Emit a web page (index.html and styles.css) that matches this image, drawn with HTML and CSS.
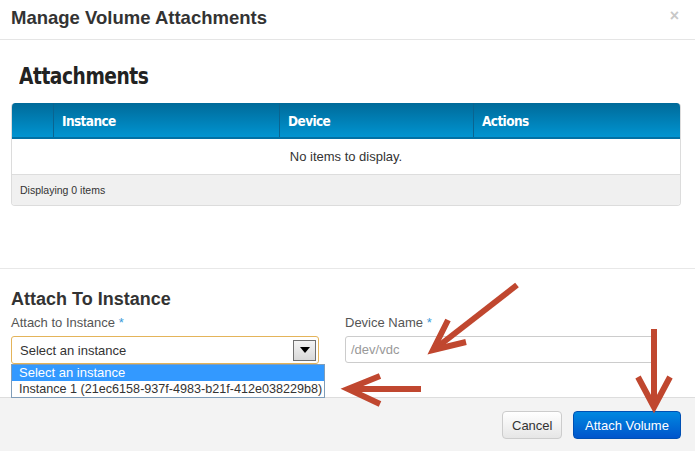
FILE: index.html
```html
<!DOCTYPE html>
<html>
<head>
<meta charset="utf-8">
<link rel="stylesheet" href="styles.css">
</head>
<body>
<div class="modal">
  <div class="modal-header">
    <h3 class="modal-title">Manage Volume Attachments</h3>
    <span class="close">×</span>
  </div>
  <div class="attachments">
    <h2 class="section-title">Attachments</h2>
    <div class="table">
      <div class="thead">
        <div class="th th-check"></div>
        <div class="th th-inst">Instance</div>
        <div class="th th-dev">Device</div>
        <div class="th th-act">Actions</div>
      </div>
      <div class="tbody-empty">No items to display.</div>
      <div class="tfoot">Displaying 0 items</div>
    </div>
  </div>
  <div class="attach">
    <h3 class="attach-title">Attach To Instance</h3>
    <div class="form-row">
      <div class="field field-instance">
        <label class="label">Attach to Instance <span class="req">*</span></label>
        <div class="select">
          <span class="select-text">Select an instance</span>
          <span class="select-btn"><span class="tri"></span></span>
        </div>
        <div class="dropdown">
          <div class="opt opt-active">Select an instance</div>
          <div class="opt">Instance 1 (21ec6158-937f-4983-b21f-412e038229b8)</div>
        </div>
      </div>
      <div class="field field-device">
        <label class="label">Device Name <span class="req">*</span></label>
        <div class="input">/dev/vdc</div>
      </div>
    </div>
  </div>
  <div class="modal-footer">
    <button class="btn btn-cancel">Cancel</button>
    <button class="btn btn-primary">Attach Volume</button>
  </div>
  <svg class="arrows" width="695" height="451" viewBox="0 0 695 451">
    <g fill="none" stroke="#c0472f" stroke-width="6" stroke-linejoin="miter" stroke-linecap="butt">
      <line x1="517" y1="285" x2="436" y2="348"/>
      <polyline points="448,320 433,350 466,342"/>
      <line x1="421" y1="389" x2="350" y2="389"/>
      <polyline points="380,376 348,389 380,404"/>
      <line x1="654" y1="329" x2="654" y2="404"/>
      <polyline points="638,377 654,407 670,377"/>
    </g>
  </svg>
</div>
</body>
</html>
```

FILE: styles.css
```css
* { box-sizing: border-box; }
html, body { margin: 0; padding: 0; background: #fff; }
body {
  font-family: "Liberation Sans", Arial, sans-serif;
  color: #333;
  width: 695px;
  height: 451px;
  overflow: hidden;
}
.modal { position: relative; width: 695px; height: 451px; display: flex; flex-direction: column; }
.modal-header {
  height: 40px;
  border-bottom: 1px solid #e5e5e5;
  display: flex;
  align-items: center;
  justify-content: space-between;
  padding: 0 16px 4px 11px;
}
.modal-title { margin: 0; font-size: 18.5px; font-weight: bold; color: #333; }
.close { color: #c8c8c8; font-size: 16px; font-weight: bold; margin-top: -4px; }
.attachments { padding: 23px 14px 0 11px; height: 229px; border-bottom: 1px solid #e8e8e8; }
.section-title {
  margin: 0 0 13px 8px;
  font-family: "DejaVu Sans Condensed", "DejaVu Sans", sans-serif;
  font-stretch: condensed;
  font-size: 23px;
  font-weight: bold;
  color: #222;
  line-height: 27px;
  letter-spacing: -0.5px;
  transform: scaleX(0.9);
  transform-origin: left center;
}
.table { border-radius: 4px; border: 1px solid #dcdcdc; border-top: none; overflow: hidden; }
.thead {
  display: flex;
  height: 36px;
  background: linear-gradient(#006a99, #0094d1);
  border-bottom: 2px solid #0170a4;
  border-radius: 4px 4px 0 0;
  margin: 0 -1px;
}
.th {
  color: #fff;
  font-family: "DejaVu Sans Condensed", "DejaVu Sans", sans-serif;
  font-stretch: condensed;
  font-weight: bold;
  font-size: 13.5px;
  letter-spacing: -0.6px;
  padding: 10px 8px 0 8px;
  border-left: 1px solid #0a6490;
}
.th-check { width: 42px; border-left: none; }
.th-inst { width: 226px; }
.th-dev { width: 194px; }
.th-act { flex: 1; }
.tbody-empty { height: 35px; line-height: 35px; text-align: center; font-size: 13px; color: #333; background: #fff; }
.tfoot { height: 31px; line-height: 30px; background: #f0f0f0; border-top: 1px solid #ddd; font-size: 10.5px; padding-left: 8px; color: #333; }
.attach { padding: 20px 14px 0 11px; height: 128px; }
.attach-title { margin: 0 0 6px 0; font-size: 18px; font-weight: bold; color: #333; line-height: 20px; }
.form-row { display: flex; gap: 26px; }
.field { position: relative; display: flex; flex-direction: column; }
.field-instance { width: 308px; }
.field-device { width: 309px; }
.label { font-size: 13px; color: #555; line-height: 16px; margin-bottom: 5px; }
.req { color: #3a9ad9; }
.select {
  height: 28px;
  border: 1px solid #e4b45a;
  border-radius: 3px;
  display: flex;
  align-items: center;
  justify-content: space-between;
  padding: 0 2px 0 8px;
  font-size: 13px;
  color: #333;
}
.select-btn {
  width: 23px; height: 21px;
  border: 1px solid #707070;
  background: linear-gradient(#f4f4f4, #d8d8d8);
  display: flex; align-items: center; justify-content: center;
}
.tri { width: 0; height: 0; border-left: 5px solid transparent; border-right: 5px solid transparent; border-top: 6px solid #000; }
.dropdown {
  position: absolute;
  left: 0; top: 49px;
  width: 314px;
  border: 1px solid #7f9db9;
  background: #fff;
  font-size: 12.6px;
  z-index: 2;
}
.opt { height: 16px; line-height: 16px; padding-left: 7px; color: #333; white-space: nowrap; }
.opt-active { background: #3399ff; color: #fff; font-size: 13px; }
.input {
  height: 27px;
  border: 1px solid #ccc;
  border-radius: 3px;
  line-height: 26px;
  padding-left: 5px;
  font-size: 13px;
  color: #999;
}
.modal-footer {
  flex: 1;
  background: #f3f3f3;
  border-top: 1px solid #ddd;
  display: flex;
  justify-content: flex-end;
  align-items: flex-start;
  gap: 11px;
  padding: 13px 14px 0 0;
}
.btn {
  height: 28px;
  border-radius: 4px;
  font-family: "Liberation Sans", Arial, sans-serif;
  font-size: 13px;
  padding: 0 9px;
}
.btn-cancel { background: linear-gradient(#fff, #e6e6e6); border: 1px solid #ccc; color: #333; width: 60px; }
.btn-primary { background: linear-gradient(#0088e0, #0055cc); border: 1px solid #0050b3; color: #fff; width: 108px; }
.arrows { position: absolute; left: 0; top: 0; pointer-events: none; z-index: 5; }
```
